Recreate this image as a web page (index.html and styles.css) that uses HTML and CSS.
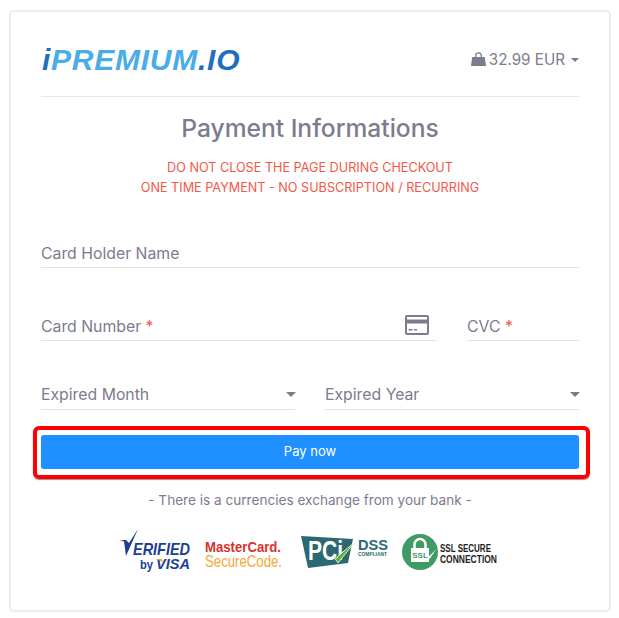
FILE: index.html
```html
<!DOCTYPE html>
<html lang="en">
<head>
<meta charset="utf-8">
<title>Payment</title>
<link rel="stylesheet" href="styles.css">
</head>
<body>
<main class="card">
  <header class="top">
    <div class="logo"><span class="logo-i">i</span><span class="logo-p">PREMIUM</span><span class="logo-io">.IO</span></div>
    <div class="price">
      <svg class="bag" viewBox="0 0 15 14" width="15" height="14"><path d="M1.200 5h12.600l1.200 9H0z" fill="#7d7b8e"/><path d="M4.700 7V3.600a2.800 2.800 0 0 1 5.600 0V7" fill="none" stroke="#7d7b8e" stroke-width="1.300"/></svg>
      <span>32.99 EUR</span><i class="caret small"></i>
    </div>
  </header>
  <h1 class="title">Payment Informations</h1>
  <p class="notice">DO NOT CLOSE THE PAGE DURING CHECKOUT<br>ONE TIME PAYMENT - NO SUBSCRIPTION / RECURRING</p>
  <div class="field holder">Card Holder Name</div>
  <div class="row card-row">
    <div class="field number"><span>Card Number <b>*</b></span>
      <svg class="cc" viewBox="0 0 24 20" width="24" height="20"><path fill-rule="evenodd" d="M2 0h20a2 2 0 0 1 2 2v16a2 2 0 0 1-2 2H2a2 2 0 0 1-2-2V2a2 2 0 0 1 2-2zm0 2v2.600h20V2zm0 6.500V18h20V8.500zM3.500 14h4v1.500h-4zm5.500 0h3v1.500H9z" fill="#7d7b8e"/></svg>
    </div>
    <div class="field cvc"><span>CVC <b>*</b></span></div>
  </div>
  <div class="row select-row">
    <div class="field select"><span>Expired Month</span><i class="caret"></i></div>
    <div class="field select"><span>Expired Year</span><i class="caret"></i></div>
  </div>
  <div class="pay-wrap"><button class="pay" type="button">Pay now</button></div>
  <p class="exchange">- There is a currencies exchange from your bank -</p>
  <div class="badges">
    <svg class="badge visa" width="72" height="42" viewBox="0 0 72 42">
      <path d="M0 11h7l2 4z" fill="#f0a52e"/>
      <path d="M7 27 19 0 10 14l-3-3-5 0 3 1z" fill="#1c3f94"/>
      <text x="14" y="26" class="visa-a" textLength="57" lengthAdjust="spacingAndGlyphs">ERIFIED</text>
      <text x="21" y="40" class="visa-b" textLength="13" lengthAdjust="spacingAndGlyphs">by</text>
      <text x="37" y="40" class="visa-c" textLength="34" lengthAdjust="spacingAndGlyphs">VISA</text>
      <path d="M37 30h6l1 3z" fill="#f0a52e"/>
    </svg>
    <svg class="badge mc" width="78" height="30" viewBox="0 0 78 30">
      <text x="0" y="13" class="mc-a" textLength="76" lengthAdjust="spacingAndGlyphs">MasterCard.</text>
      <text x="0" y="28" class="mc-b" textLength="77" lengthAdjust="spacingAndGlyphs">SecureCode.</text>
    </svg>
    <svg class="badge pcib" width="88" height="34" viewBox="0 0 88 34">
      <path d="M0 1 52 4 47 28 7 33z" fill="#2c6872"/>
      <text x="7" y="25" class="pci" textLength="35" lengthAdjust="spacingAndGlyphs">PCi</text>
      <path d="M32 21l5 7L54 7 37 21l-1 2z" fill="#5cb33b" stroke="#fff" stroke-width=".8"/>
      <text x="57" y="15" class="dss" textLength="30" lengthAdjust="spacingAndGlyphs">DSS</text>
      <text x="57" y="21" class="comp" textLength="29" lengthAdjust="spacingAndGlyphs">COMPLIANT</text>
    </svg>
    <svg class="badge" width="96" height="36" viewBox="0 0 96 36">
      <circle cx="18" cy="18" r="18" fill="#3f9a63"/>
      <path d="M12.500 14v-3.500a5.500 5.500 0 0 1 11 0V14" fill="none" stroke="#fff" stroke-width="2.500"/>
      <rect x="9" y="14" width="18" height="14" fill="#fff"/>
      <text x="18" y="24" class="ssl">SSL</text>
      <path d="M25 22l2.500 3 7-10-7 7z" fill="#fff"/>
      <text x="38" y="18" class="sec" textLength="51" lengthAdjust="spacingAndGlyphs">SSL SECURE</text>
      <text x="38" y="29" class="sec" textLength="57" lengthAdjust="spacingAndGlyphs">CONNECTION</text>
    </svg>
  </div>
</main>
</body>
</html>
```
FILE: styles.css
```css
* { box-sizing: border-box; }
html, body { height: 100%; }
body {
  margin: 0;
  padding: 10px 9px 0 9px;
  background: #fff;
  font-family: "Inter", "Liberation Sans", sans-serif;
  color: #7d7b8e;
}
.card {
  width: 602px;
  height: 602px;
  border: 2px solid #ececec;
  border-radius: 5px;
  padding: 0 30px;
}
.top {
  height: 85px;
  display: flex;
  align-items: center;
  justify-content: space-between;
  border-bottom: 1px solid #e6e6ec;
  padding-top: 11px;
}
.logo {
  font: italic bold 30px "Liberation Sans", sans-serif;
  letter-spacing: .75px;
  margin-left: 1px;
}
.logo-i, .logo-io { color: #1f6fbb; }
.logo-p { color: #49ade6; }
.price {
  display: flex;
  align-items: center;
  font-size: 15.200px;
  gap: 3px;
}
.bag { margin-top: -2px; }
.caret {
  width: 0;
  height: 0;
  border: 5px solid transparent;
  border-top-color: #7d7b8e;
  border-bottom: 0;
}
.caret.small { margin-left: 3px; border-width: 4.500px 4.500px 0; }
.title {
  margin: 15px 0 0;
  font-size: 24.600px;
  font-weight: 500;
  line-height: 32px;
  text-align: center;
  color: #7d7b8e;
}
.notice {
  margin: 14px 0 0;
  font-size: 12.650px;
  line-height: 20px;
  text-align: center;
  color: #f4574a;
}
.field {
  display: flex;
  align-items: center;
  justify-content: space-between;
  height: 32px;
  padding-top: 4px;
  border-bottom: 1px solid #e4e4e4;
  font-size: 15.800px;
}
.field b { font-weight: 400; color: #f4574a; }
.holder { margin-top: 36px; height: 34px; padding-top: 6px; }
.row { display: flex; }
.card-row { gap: 30px; margin-top: 41px; }
.number { flex: 1; }
.cvc { width: 112px; }
.cc { margin-right: 8px; margin-top: -4px; }
.select-row { gap: 30px; margin-top: 37px; }
.select { flex: 1; padding-top: 2px; }
.select .caret { margin-right: -1px; }
.pay-wrap { position: relative; margin-top: 25px; }
.pay-wrap::after {
  content: "";
  position: absolute;
  inset: -9px -11px -10px -8px;
  border: 4px solid #f00;
  border-radius: 6px;
  box-shadow: 0 1px 1px rgba(0, 0, 0, .45);
  pointer-events: none;
}
.pay {
  display: block;
  width: 100%;
  height: 34px;
  padding: 0 0 2px;
  border: 0;
  border-radius: 3px;
  background: #1e90ff;
  color: #fff;
  font: 13px "Inter", "Liberation Sans", sans-serif;
}
.exchange {
  margin: 22px 0 0;
  font-size: 13.600px;
  line-height: 18px;
  text-align: center;
}
.badges {
  display: flex;
  align-items: center;
  justify-content: center;
  margin-top: 24px;
  padding-right: 3px;
}
.badge { display: block; flex: none; overflow: visible; }
.visa { margin-right: 14px; margin-top: -4px; }
.mc { margin-right: 18px; margin-top: 4px; }
.pcib { margin-right: 13px; }
.visa-a { font: italic 700 16.500px "Liberation Sans", sans-serif; fill: #1c3f94; }
.visa-b { font: 700 13px "Liberation Sans", sans-serif; fill: #1c3f94; }
.visa-c { font: italic 700 15px "Liberation Sans", sans-serif; fill: #1c3f94; }
.mc-a { font: 700 15.500px "Liberation Sans", sans-serif; fill: #d8322c; }
.mc-b { font: 400 16.500px "Liberation Sans", sans-serif; fill: #f5a635; }
.pci { font: 700 27px "Liberation Sans", sans-serif; fill: #fff; }
.dss { font: 700 14px "Liberation Sans", sans-serif; fill: #2c6872; }
.comp { font: 700 4.500px "Liberation Sans", sans-serif; fill: #2c6872; }
.ssl { font: 700 8px "Liberation Sans", sans-serif; fill: #3f9a63; text-anchor: middle; }
.sec { font: 700 10.500px "Liberation Sans", sans-serif; fill: #222; }
```
